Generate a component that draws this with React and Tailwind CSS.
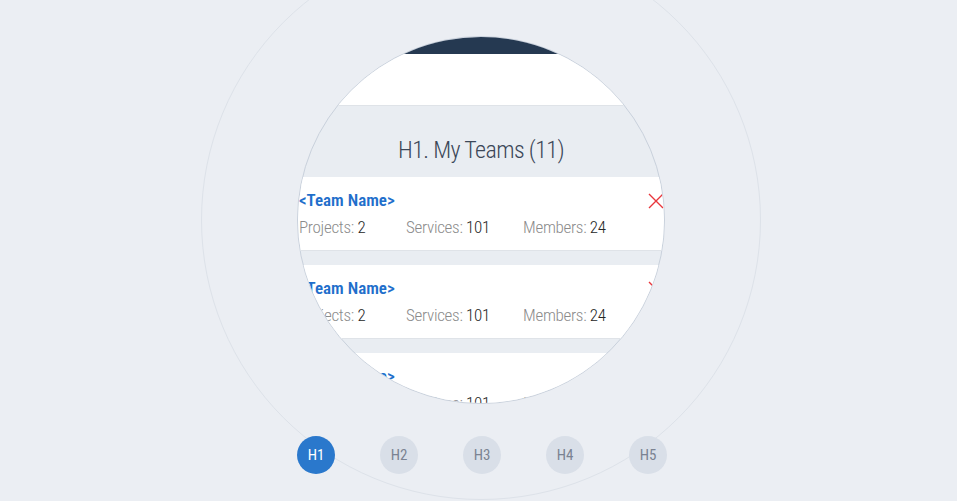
const teams = [
  { name: "<Team Name>", projects: 2, services: 101, members: 24 },
  { name: "<Team Name>", projects: 2, services: 101, members: 24 },
  { name: "<Team Name>", projects: 2, services: 101, members: 24 },
];

const tabs = ["H1", "H2", "H3", "H4", "H5"];

function Stat({ label, value }) {
  return (
    <span className="whitespace-nowrap">
      <span className="text-[#8b8b8b] font-light">{label}: </span>
      <span className="text-[#262626] font-light">{value}</span>
    </span>
  );
}

function TeamCard({ team }) {
  return (
    <div className="h-[74px] shrink-0 bg-white border-b border-[#dfe3e8] pt-[12px] pl-[1px]">
      <div className="flex items-start justify-between">
        <div className="text-[17px] leading-[22px] font-semibold text-[#1f6fcb]">{team.name}</div>
        <svg width="16" height="16" viewBox="0 0 16 16" className="mt-[4px]">
          <path d="M1 1L15 15M15 1L1 15" stroke="#e8363c" strokeWidth="1.4" fill="none" />
        </svg>
      </div>
      <div className="grid grid-cols-[107px_117px_auto] mt-[4px] text-[17px] leading-[24px] tracking-[-0.3px]">
        <Stat label="Projects" value={team.projects} />
        <Stat label="Services" value={team.services} />
        <Stat label="Members" value={team.members} />
      </div>
    </div>
  );
}

export default function App() {
  return (
    <div
      className="relative w-[957px] h-[501px] overflow-hidden bg-[#ebeef3]"
      style={{ fontFamily: "'Roboto Condensed', Roboto, sans-serif" }}
    >
      {/* faint outer ring */}
      <div className="absolute left-[201px] top-[-60px] w-[560px] h-[560px] rounded-full border border-[#dde2e9]" />

      <div className="relative flex flex-col">
        {/* magnified phone view */}
        <div className="ml-[297px] mt-[36px] w-[368px] h-[368px] rounded-full border border-[#c9d1dc] overflow-hidden bg-[#e9edf2] flex flex-col">
          <div className="h-[17px] shrink-0 bg-[#253951]" />
          <div className="h-[52px] shrink-0 bg-white border-b border-[#dfe3e8]" />
          <div className="h-[71px] shrink-0 pt-[28px] text-center text-[24px] leading-[32px] tracking-[-0.6px] font-light text-[#3b4758]">
            H1. My Teams (11)
          </div>
          <div className="flex flex-col gap-[14px]">
            {teams.map((t, i) => (
              <TeamCard key={i} team={t} />
            ))}
          </div>
        </div>

        {/* tabs */}
        <div className="ml-[297px] mt-[32px] flex gap-[45px]">
          {tabs.map((t, i) => (
            <div
              key={t}
              className={
                i === 0
                  ? "w-[38px] h-[38px] rounded-full flex items-center justify-center text-[15px] bg-[#2a78cc] text-white"
                  : "w-[38px] h-[38px] rounded-full flex items-center justify-center text-[15px] bg-[#d9dfe8] text-[#7b8392]"
              }
            >
              {t}
            </div>
          ))}
        </div>
      </div>
    </div>
  );
}
